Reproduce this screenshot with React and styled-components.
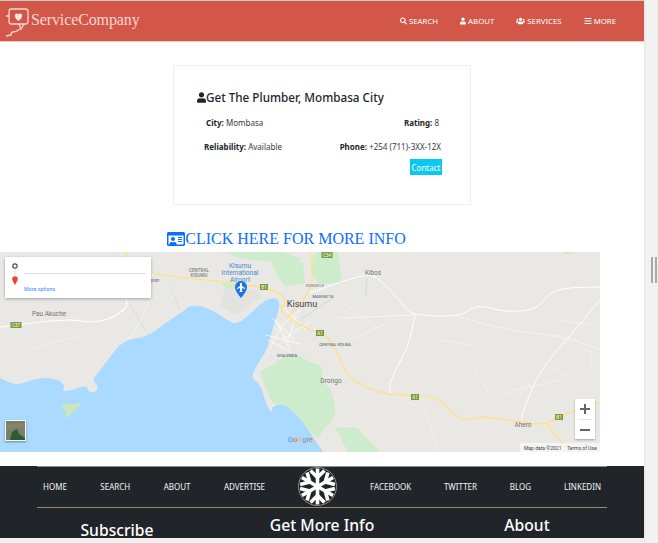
import React from 'react';
import styled, { createGlobalStyle } from 'styled-components';
import { FaSearch, FaUser, FaUsers, FaBars, FaRegIdCard } from 'react-icons/fa';

const Global = createGlobalStyle`
  html, body { margin: 0; padding: 0; background: #f1f1f1; overflow: hidden; }
  * { box-sizing: border-box; }
`;

const UI = '"Noto Sans", "Open Sans", sans-serif';

const Frame = styled.div`
  width: 658px; height: 543px; display: flex; overflow: hidden; background: #f1f1f1;
`;
const Page = styled.div`
  width: 644px; height: 538px; background: #fff; display: flex; flex-direction: column;
  font-family: ${UI}; overflow: hidden; flex: none; border-top: 1px solid #c8c8c8;
`;
const Rail = styled.div`
  width: 14px; flex: none; padding: 257px 1px 0 6px; border-left: 1px solid #e6e6e6;
`;
const Thumb = styled.div`
  width: 6px; height: 26px; border-left: 2px solid #a8a8a8; border-right: 2px solid #a8a8a8;
`;
const Header = styled.header`
  height: 41px; flex: none; background: #d35749; border-bottom: 1px solid #f2c9c3;
  display: flex; align-items: center; justify-content: space-between; padding: 0 28px 0 4px;
`;
const Brand = styled.div`
  display: flex; align-items: center; gap: 1px; color: #f4d8d3;
  font-family: "Liberation Serif", serif; font-size: 16px; letter-spacing: -.12px;
  svg { display: block; }
  span { margin-top: -3px; }
`;
const Nav = styled.nav`display: flex; gap: 22px; margin-top: -1px;`;
const NavItem = styled.a`
  display: flex; align-items: center; gap: 2px; color: #fff; font-size: 7.8px; text-transform: uppercase;
  svg { width: ${p => p.$w || 7}px; height: 8px; }
`;
const Main = styled.main`
  display: flex; flex-direction: column; align-items: center; padding-top: 23px;
`;
const Card = styled.section`
  width: 298px; height: 140px; border: 1px solid #eceeef; padding: 23px 27px 0 23px;
  display: flex; flex-direction: column;
`;
const Title = styled.h2`
  margin: 0; font-size: 11.7px; font-weight: 500; color: #212529; line-height: 16px;
  display: flex; align-items: center;
  svg { width: 9px; height: 11px; }
`;
const Row = styled.div`
  display: flex; justify-content: space-between; font-size: 8px; color: #343a40; line-height: 12px;
  margin-top: ${p => p.$mt}px; padding: 0 ${p => p.$right}px 0 ${p => p.$left}px;
  b { font-weight: 700; color: #212529; }
`;
const ContactRow = styled.div`display: flex; justify-content: flex-end; margin-top: 6px;`;
const Contact = styled.button`
  width: 33px; height: 16px; padding: 0; border: 0; border-right: 1px solid #fff; background: #0ac8f0; color: #fff;
  font-family: ${UI}; font-size: 8px;
`;
const MoreLink = styled.a`
  display: flex; align-items: center; margin-top: 24px; height: 20px; margin-left: -71px;
  font-family: "Liberation Serif", serif; font-size: 16px; color: #0d6efd; white-space: nowrap;
  svg { width: 18px; height: 18px; }
`;
const MapWrap = styled.div`
  position: relative; width: 600px; height: 200px; margin-top: 3px; flex: none; overflow: hidden; align-self: flex-start;
  svg.map { display: block; }
`;
const DirCard = styled.div`
  position: absolute; left: 5px; top: 5px; width: 146px; height: 41px; background: #fff;
  box-shadow: 0 1px 3px rgba(0,0,0,.3); padding: 6px 5px 0 7px;
  svg { display: block; flex: none; }
`;
const DirBody = styled.div`display: flex; gap: 6px;`;
const DirLine = styled.div`flex: 1; margin-top: 10px; height: 1px; background: #dcdcdc;`;
const MoreOptions = styled.a`
  display: block; margin: 0 0 0 12px; font-family: Roboto, sans-serif; font-size: 5.3px; line-height: 7px; color: #4285f4;
`;
const Zoom = styled.div`
  position: absolute; left: 575px; top: 147px; width: 20px; height: 40px; background: #fff;
  box-shadow: 0 1px 2px rgba(0,0,0,.3); display: flex; flex-direction: column; align-items: center;
`;
const ZoomPart = styled.div`
  height: 20px; width: 14px; display: flex; align-items: center; justify-content: center;
  border-top: ${p => p.$line ? '1px solid #e6e6e6' : '0'};
`;
const Thumbnail = styled.div`
  position: absolute; left: 5px; top: 168px; width: 21px; height: 21px; border: 1px solid #fff;
  box-shadow: 0 1px 2px rgba(0,0,0,.4); background: #6e7d5c; overflow: hidden;
  svg { display: block; }
`;
const Footer = styled.footer`
  margin-top: 14px; flex: 1; background: #212529; position: relative; display: flex; flex-direction: column;
  align-items: center;
  &::before { content: ""; position: absolute; left: 37px; right: 37px; top: 0; height: 1px; background: #8d8f91; }
`;
const FootNav = styled.div`
  width: 570px; height: 42px; flex: none; border-bottom: 1px solid #9a8a66; position: relative;
  display: grid; grid-template-columns: 261px 1fr;
`;
const FootLinks = styled.div`
  display: flex; align-items: center; justify-content: space-between; padding: ${p => p.$pad};
  padding-bottom: 1px;
  a { color: #f1f5fa; font-size: 8px; text-transform: uppercase; white-space: nowrap; }
`;
const Snow = styled.div`
  position: absolute; left: 261px; top: 1px; width: 39px; height: 39px; border-radius: 50%;
  border: 1px solid #8d8f91; background: #212529; overflow: hidden;
  svg { display: block; }
`;
const FootCols = styled.div`
  width: 644px; flex: none; display: grid; grid-template-columns: 234px 176px 234px; overflow: hidden;
`;
const FootHead = styled.h3`
  margin: ${p => p.$mt}px 0 0; font-size: 15.7px; font-weight: 500; color: #fff; text-align: center; line-height: 20px;
`;

const MapLabel = styled.text`
  font-family: Roboto, sans-serif; font-size: ${p => p.$s || 6}px; fill: ${p => p.$c || '#70757a'};
  font-weight: ${p => p.$w || 400}; text-anchor: middle;
`;

// Rounds the corners of a traced outline through the midpoints of its segments.
const smooth = (pts, closed) => {
  const mid = (a, b) => [(a[0] + b[0]) / 2, (a[1] + b[1]) / 2];
  let d = `M${pts[0][0]} ${pts[0][1]}`;
  for (let i = 1; i < pts.length - 1; i++) {
    const m = mid(pts[i], pts[i + 1]);
    d += ` Q${pts[i][0]} ${pts[i][1]} ${m[0]} ${m[1]}`;
  }
  const l = pts[pts.length - 1];
  d += ` L${l[0]} ${l[1]}`;
  return closed ? d + ' Z' : d;
};

const lake = smooth([[0,378],[13,385],[23,383],[43,377],[60,380],[65,387],[62,392],[75,389],[87,385],[88,392],[97,392],[98,385],[92,380],[100,370],[108,360],[123,340],[147,337],[167,322],[185,310],[190,305],[207,307],[227,320],[238,325],[257,307],[270,297],[280,300],[278,313],[272,330],[267,350],[260,360],[250,378],[260,383],[267,407],[273,414],[271,407],[283,403],[300,417],[323,452]]) + ' L0 452 Z';
const southGreen = smooth([[260,372],[276,364],[290,350],[310,363],[322,365],[323,383],[332,390],[337,417],[322,430],[318,442],[300,417],[283,403],[272,405],[260,372]], true);
const roadA1 = smooth([[153,274],[233,283],[263,287],[278,292],[287,300],[280,310],[288,318],[310,330],[327,335],[340,357],[347,377],[377,393],[413,396],[437,396],[457,418],[467,420],[483,416],[520,422],[547,425],[573,410],[600,402]]);
const roadN = smooth([[312,253],[313,273],[310,293],[288,317]]);
const white1 = smooth([[0,327],[67,318],[90,323],[113,318],[130,305],[120,290]]);
const white2 = smooth([[310,293],[363,273],[380,278],[407,310],[415,315],[460,317],[478,304],[503,312],[538,310],[552,288],[600,287]]);
const white3 = smooth([[415,315],[410,343],[397,367],[388,387],[393,395]]);
const white4 = smooth([[600,300],[568,338],[540,370],[522,413],[522,424]]);
const white5 = smooth([[460,317],[500,330],[560,335],[600,350]]);

const Shield = ({ x, y, t, w = 11 }) => (
  <g>
    <rect x={x - w / 2} y={y - 3} width={w} height={6} fill="#7a9a3c" />
    <MapLabel x={x} y={y + 1.8} $s={4.6} $c="#fff">{t}</MapLabel>
  </g>
);

const MapArt = () => (
  <svg className="map" width="600" height="200" viewBox="0 252 600 200">
    <rect x="0" y="252" width="600" height="200" fill="#e9e8e4" />
    <g fill="#cdeccb">
      <path d="M280 267 L303 262 L305 283 L285 286 Z" />
      <path d="M316 252 L338 252 L342 283 L318 284 L310 268 Z" />
      <path d="M227 252 L283 252 L300 258 L303 283 L285 286 L277 275 L272 262 L240 258 Z" />
      <path d="M223 283 L240 285 L232 291 L224 290 Z" />
      <path d={southGreen} />
      <path d="M335 427 L357 428 L380 452 L348 452 Z" />
      <path d="M562 252 L575 252 L572 254 L564 254 Z" />
    </g>
    <path fill="#aadaff" d={lake} />
    <path fill="#cbe6b8" d="M60 405 L83 403 L65 419 L66 411 Z" />
    <path fill="#e2e2df" d="M225 288 L258 290 L262 296 L236 315 L220 306 Z" />
    <g fill="none" stroke="#fff" strokeLinejoin="round" strokeLinecap="round">
      <path d={white1} strokeWidth="1.1" />
      <path d="M128 253 L124 260 L110 275" strokeWidth=".6" />
      <path d={white2} strokeWidth="1" />
      <path d={white3} strokeWidth="1" />
      <path d={white4} strokeWidth=".9" />
      <path d={white5} strokeWidth=".5" />
      <path d="M340 318 L415 315" strokeWidth=".6" />
      <path d="M276 330 L300 310 M282 340 L310 322 M272 318 L295 340 M284 308 L306 330 M268 340 L290 352 M276 320 L290 350 M270 348 L282 326 M296 316 L288 340 M266 335 L300 344" strokeWidth=".7" />
      <path d="M440 452 L425 410 L395 396 M170 300 L200 270 M30 350 L80 335 M150 300 L130 340 M520 390 L560 380 M470 360 L490 395 M340 300 L380 330 M350 340 L395 320 M440 340 L470 345 M560 320 L590 325" strokeWidth=".35" />
      <path d="M555 370 L590 350 L592 365 L575 380 Z M500 395 L530 385 M505 410 L530 385 L540 398" strokeWidth=".35" />
    </g>
    <g fill="none" stroke="#fde293" strokeWidth="1.7" strokeLinejoin="round">
      <path d={roadA1} />
      <path d="M547 425 L570 452" />
      <path d={roadN} />
      <path d="M128 252 L125 258" />
    </g>
    <path d="M149 285 L153 274" stroke="#fff" strokeWidth="1" />
    <path d="M330 300 L300 320" stroke="#9ccbe8" strokeWidth=".5" fill="none" />
    <path d="M367 278 L366 296" stroke="#aad4ee" strokeWidth=".6" fill="none" />
    <path d="M170 285 L180 310 M130 305 L148 335" stroke="#b5d8ee" strokeWidth=".5" fill="none" />

    <MapLabel x="199" y="272" $s={4.6} $w={500} $c="#7d8187">CENTRAL</MapLabel>
    <MapLabel x="199" y="277" $s={4.6} $w={500} $c="#7d8187">KISUMU</MapLabel>
    <MapLabel x="240" y="268" $s={6.6} $c="#4a86d8">Kisumu</MapLabel>
    <MapLabel x="240" y="275" $s={6.6} $c="#4a86d8">International</MapLabel>
    <MapLabel x="240" y="282" $s={6.6} $c="#4a86d8">Airport</MapLabel>
    <path d="M241 298 C236 292 235 289 235 287 a6 6 0 0 1 12 0 C247 289 246 292 241 298 Z" fill="#1a73e8" />
    <path d="M240 283 L242 283 L242 286 L245 288 L245 289 L242 288 L242 291 L243 292 L239 292 L240 291 L240 288 L237 289 L237 288 L240 286 Z" fill="#fff" />
    <MapLabel x="49" y="316" $s={6.4} $c="#6f7377">Pau Akuche</MapLabel>
    <MapLabel x="153" y="282" $s={4.6} $c="#6f7377">Kisian</MapLabel>
    <MapLabel x="373" y="275" $s={6.4} $c="#6f7377">Kibos</MapLabel>
    <MapLabel x="302" y="307" $s={9} $c="#3c4043">Kisumu</MapLabel>
    <MapLabel x="315" y="287" $s={4.2} $w={500} $c="#8a8fa0">KONDELE</MapLabel>
    <MapLabel x="323" y="298" $s={4} $w={500} $c="#6a6f7a">MANYATTA</MapLabel>
    <MapLabel x="335" y="346" $s={4} $w={500} $c="#6a6f7a">CENTRAL KOLWA</MapLabel>
    <MapLabel x="287" y="357" $s={4} $w={500} $c="#6a6f7a">NYALENDA</MapLabel>
    <MapLabel x="331" y="383" $s={6.6} $c="#6f7377">Drongo</MapLabel>
    <MapLabel x="523" y="427" $s={6.4} $c="#6f7377">Ahero</MapLabel>
    <Shield x={264} y={287} t="B1" w={8} />
    <Shield x={327} y={255} t="C34" />
    <Shield x={320} y={333} t="A1" w={8} />
    <Shield x={415} y={397} t="A1" w={8} />
    <Shield x={559} y={417} t="B1" w={8} />
    <Shield x={16} y={325} t="C37" w={11} />
    <text x="287.5" y="442" fontFamily="Roboto, sans-serif" fontSize="8" fontWeight="500">
      <tspan fill="#6f9cf3">G</tspan><tspan fill="#ee6a5f">o</tspan><tspan fill="#f5c33b">o</tspan><tspan fill="#6f9cf3">g</tspan><tspan fill="#5dbb63">l</tspan><tspan fill="#ee6a5f">e</tspan>
    </text>
    <rect x="520" y="443" width="80" height="9" fill="#fff" fillOpacity=".55" />
    <text x="524" y="449.5" fontFamily="Roboto, sans-serif" fontSize="5" fill="#444">Map data ©2021</text>
    <text x="567" y="449.5" fontFamily="Roboto, sans-serif" fontSize="5" fill="#444">Terms of Use</text>
  </svg>
);

const SnowArt = () => (
  <svg width="37" height="37" viewBox="-18.5 -18.5 37 37">
    {[0, 60, 120, 180, 240, 300].map(a => (
      <g key={a} transform={`rotate(${a})`} stroke="#fff" strokeWidth="3.6" fill="none" strokeLinecap="butt">
        <path d="M0 0 L0 -18" />
        <path d="M-7 -16 L0 -9 L7 -16" />
      </g>
    ))}
  </svg>
);

const Logo = () => (
  <svg width="26" height="36" viewBox="0 0 26 36" fill="none" stroke="#f4d8d3" strokeWidth="1.3">
    <rect x="5" y="6" width="19" height="15" rx="2.5" />
    <path d="M2 13 L5 13 M15 21 L17 26 L20 21" />
    <path d="M16 26 Q12 29 9 29 Q7 29 7 32 L2 33" />
    <path d="M14.5 18 C10 14.5 10 11 12.5 10.5 C13.7 10.3 14.5 11.5 14.5 11.5 C14.5 11.5 15.3 10.3 16.5 10.5 C19 11 19 14.5 14.5 18 Z" fill="#f8e6e3" stroke="none" />
  </svg>
);

export default function App() {
  return (
    <>
      <Global />
      <Frame>
        <Page>
          <Header>
            <Brand><Logo /><span>ServiceCompany</span></Brand>
            <Nav>
              <NavItem><FaSearch />Search</NavItem>
              <NavItem $w={6}><FaUser />About</NavItem>
              <NavItem $w={9}><FaUsers />Services</NavItem>
              <NavItem $w={8}><FaBars />More</NavItem>
            </Nav>
          </Header>
          <Main>
            <Card>
              <Title><FaUser />Get The Plumber, Mombasa City</Title>
              <Row $mt={12} $left={9} $right={4}><span><b>City:</b> Mombasa</span><span><b>Rating:</b> 8</span></Row>
              <Row $mt={12} $left={7} $right={2}><span><b>Reliability:</b> Available</span><span><b>Phone:</b> +254 (711)-3XX-12X</span></Row>
              <ContactRow><Contact>Contact</Contact></ContactRow>
            </Card>
            <MoreLink><FaRegIdCard />CLICK HERE FOR MORE INFO</MoreLink>
            <MapWrap>
              <MapArt />
              <DirCard>
                <DirBody>
                  <svg width="6" height="23" viewBox="0 0 6 23">
                    <circle cx="3" cy="3" r="2.2" fill="none" stroke="#444" strokeWidth="1.2" />
                    <path d="M3 6.5 L3 12" stroke="#bbb" strokeDasharray="1 1" />
                    <path d="M3 22 C1 18 .2 17.5 .2 16 a2.8 2.8 0 0 1 5.6 0 C5.8 17.5 5 18 3 22 Z" fill="#ea4335" />
                  </svg>
                  <DirLine />
                </DirBody>
                <MoreOptions>More options</MoreOptions>
              </DirCard>
              <Zoom>
                <ZoomPart>
                  <svg width="10" height="10" viewBox="0 0 10 10"><path d="M5 0 V10 M0 5 H10" stroke="#666" strokeWidth="2" /></svg>
                </ZoomPart>
                <ZoomPart $line>
                  <svg width="10" height="10" viewBox="0 0 10 10"><path d="M0 5 H10" stroke="#666" strokeWidth="2" /></svg>
                </ZoomPart>
              </Zoom>
              <Thumbnail>
                <svg width="19" height="19" viewBox="0 0 19 19">
                  <rect width="19" height="19" fill="#76806a" />
                  <path d="M4 19 L6 11 L11 8 L13 13 L19 17 L19 19 Z" fill="#2f5a33" />
                  <path d="M0 4 L19 2 L19 6 L0 8 Z" fill="#8a8468" />
                </svg>
              </Thumbnail>
            </MapWrap>
          </Main>
          <Footer>
            <FootNav>
              <FootLinks $pad="0 33px 0 6px"><a>Home</a><a>Search</a><a>About</a><a>Advertise</a></FootLinks>
              <FootLinks $pad="0 6px 0 72px"><a>Facebook</a><a>Twitter</a><a>Blog</a><a>Linkedin</a></FootLinks>
              <Snow><SnowArt /></Snow>
            </FootNav>
            <FootCols>
              <FootHead $mt={12}>Subscribe</FootHead>
              <FootHead $mt={7}>Get More Info</FootHead>
              <FootHead $mt={7}>About</FootHead>
            </FootCols>
          </Footer>
        </Page>
        <Rail><Thumb /></Rail>
      </Frame>
    </>
  );
}
